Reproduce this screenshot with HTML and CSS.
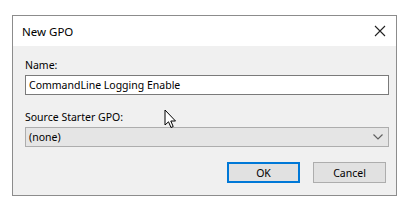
FILE: index.html
```html
<!DOCTYPE html>
<html>
<head>
<meta charset="utf-8">
<link rel="stylesheet" href="styles.css">
</head>
<body>
<div class="dialog">
  <div class="titlebar">
    <span class="title">New GPO</span>
    <svg class="close" width="12" height="12" viewBox="0 0 12 12"><path d="M1 1 L11 11 M11 1 L1 11" stroke="#222" stroke-width="1.1" fill="none"/></svg>
  </div>
  <div class="content">
    <div class="label">Name:</div>
    <div class="textbox">CommandLine Logging Enable</div>
    <div class="label second">Source Starter GPO:</div>
    <div class="combo">
      <span>(none)</span>
      <svg class="chev" width="10" height="6" viewBox="0 0 10 6"><path d="M0.5 0.5 L5 5 L9.5 0.5" stroke="#606060" stroke-width="1.2" fill="none"/></svg>
    </div>
    <div class="buttons">
      <div class="btn default">OK</div>
      <div class="btn">Cancel</div>
    </div>
  </div>
  <svg class="cursor" width="14" height="21" viewBox="0 0 14 21"><path d="M1 1 L1 16 L4.5 12.8 L7 18.5 L9.2 17.5 L6.8 12 L11.5 12 Z" fill="#fff" stroke="#000" stroke-width="1" stroke-linejoin="round"/></svg>
</div>
</body>
</html>
```
FILE: styles.css
```css
html, body {
  margin: 0;
  padding: 0;
  background: #fff;
}
body {
  font-family: "Noto Sans", "Open Sans", sans-serif;
  font-size: 10.5px;
  color: #000;
}
.dialog {
  position: relative;
  margin: 15px 0 0 12px;
  width: 385px;
  height: 181px;
  box-sizing: border-box;
  border: 1px solid #8c8c8c;
  display: flex;
  flex-direction: column;
  background: #f0f0f0;
}
.titlebar {
  height: 30px;
  background: #fff;
  display: flex;
  align-items: center;
  justify-content: space-between;
  padding: 0 10px 0 9px;
  flex: none;
}
.title {
  font-size: 11.5px;
}
.close {
  display: block;
}
.content {
  padding: 11px 7px 0 12px;
  display: flex;
  flex-direction: column;
}
.label {
  height: 16px;
  line-height: 16px;
  margin-bottom: 2px;
}
.label.second {
  margin-top: 14px;
}
.textbox {
  height: 20px;
  box-sizing: border-box;
  border: 1px solid #7a7a7a;
  background: #fff;
  line-height: 18px;
  padding-left: 3px;
}
.combo {
  height: 20px;
  box-sizing: border-box;
  border: 1px solid #adadad;
  background: #e5e5e5;
  line-height: 18px;
  padding: 0 5px 0 3px;
  display: flex;
  align-items: center;
  justify-content: space-between;
}
.chev {
  display: block;
}
.buttons {
  display: flex;
  justify-content: flex-end;
  gap: 13px;
  margin-top: 15px;
  padding-right: 3px;
}
.btn {
  width: 73px;
  height: 21px;
  box-sizing: border-box;
  border: 1px solid #adadad;
  background: #e1e1e1;
  display: flex;
  align-items: center;
  justify-content: center;
}
.btn.default {
  border: 2px solid #0078d7;
}
.cursor {
  position: absolute;
  left: 151px;
  top: 93px;
}
```
